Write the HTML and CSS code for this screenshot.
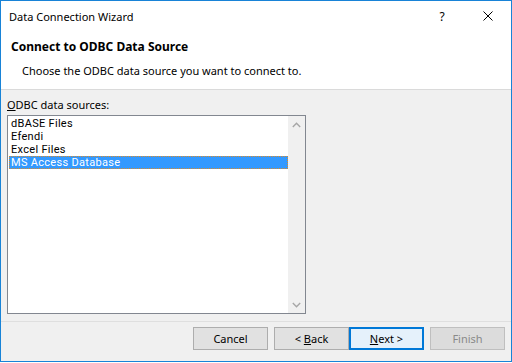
FILE: index.html
```html
<!DOCTYPE html>
<html>
<head>
<meta charset="utf-8" />
<title>Data Connection Wizard</title>
<link rel="stylesheet" href="styles.css">
</head>
<body>
<div class="window">

    <div class="titlebar">
        <span class="title">Data Connection Wizard</span>
        <span class="cap-btn help">?</span>
        <span class="cap-btn close">
            <svg width="10" height="10" viewBox="0 0 10 10"><path d="M0.5 0.5 L9.5 9.5 M9.5 0.5 L0.5 9.5" stroke="#000" stroke-width="1" fill="none"/></svg>
        </span>
    </div>

    <div class="header">
        <div class="head-title">Connect to ODBC Data Source</div>
        <div class="head-sub">Choose the ODBC data source you want to connect to.</div>
    </div>

    <div class="content">
        <div class="label"><u>O</u>DBC data sources:</div>
        <div class="listbox">
            <ul class="items">
                <li>dBASE Files</li>
                <li>Efendi</li>
                <li>Excel Files</li>
                <li class="sel">MS Access Database</li>
            </ul>
            <div class="scrollbar">
                <div class="arrow"><svg width="9" height="6" viewBox="0 0 9 6"><path d="M0.8 5 L4.5 1.3 L8.2 5" stroke="#a6a6a6" stroke-width="1.4" fill="none"/></svg></div>
                <div class="track"></div>
                <div class="arrow"><svg width="9" height="6" viewBox="0 0 9 6"><path d="M0.8 1 L4.5 4.7 L8.2 1" stroke="#a6a6a6" stroke-width="1.4" fill="none"/></svg></div>
            </div>
        </div>
    </div>

    <div class="footer">
        <button class="btn">Cancel</button>
        <button class="btn gap">&lt; <u>B</u>ack</button>
        <button class="btn default"><u>N</u>ext &gt;</button>
        <button class="btn gap disabled">Finish</button>
    </div>

</div>
</body>
</html>
```

FILE: styles.css
```css
body{margin:0;padding:0;background:#fff;font-family:"Noto Sans","Open Sans",sans-serif;font-size:11px;color:#000;}
.window{width:512px;height:362px;box-sizing:border-box;border:1px solid #1883d7;display:flex;flex-direction:column;background:#f0f0f0;}

.titlebar{height:30px;display:flex;align-items:center;background:#fff;}
.title{flex:1;padding-left:8px;}
.cap-btn{width:46px;height:30px;display:flex;align-items:center;justify-content:center;}
.help{font-size:12px;}

.header{height:58px;background:#fff;border-bottom:1px solid #dadada;padding-left:10px;}
.head-title{font-weight:bold;font-size:12px;line-height:16px;margin-top:8px;}
.head-sub{padding-left:11px;line-height:16px;margin-top:8px;}

.content{flex:1;padding:7px 0 0 6px;}
.label{line-height:15px;margin-bottom:3px;}
.listbox{width:299px;height:199px;box-sizing:border-box;border:1px solid #828790;background:#fff;display:flex;}
.items{list-style:none;margin:0;padding:1px 0 0 1px;width:279px;font-family:Roboto,"Noto Sans",sans-serif;font-size:11px;}
.items li{height:13px;line-height:13px;padding-left:2px;box-sizing:border-box;white-space:nowrap;letter-spacing:0.3px;}
.items li.sel{background:#3399ff;color:#fff;outline:1px dotted #d98a2b;outline-offset:-1px;}
.scrollbar{width:17px;background:#f0f0f0;display:flex;flex-direction:column;}
.arrow{height:17px;display:flex;align-items:center;justify-content:center;}
.track{flex:1;}

.footer{height:34px;border-top:1px solid #dfdfdf;display:flex;justify-content:flex-end;align-items:flex-start;padding:5px 6px 0 0;}
.btn{width:75px;height:23px;margin:0;padding:0;border:1px solid #adadad;background:#e1e1e1;font-family:inherit;font-size:11px;color:#000;}
.btn.gap{margin-left:6px;}
.btn.default{border:2px solid #0078d7;background:#e5f1fb;}
.btn.disabled{border-color:#bfbfbf;background:#dcdcdc;color:#8a8a8a;}
```
